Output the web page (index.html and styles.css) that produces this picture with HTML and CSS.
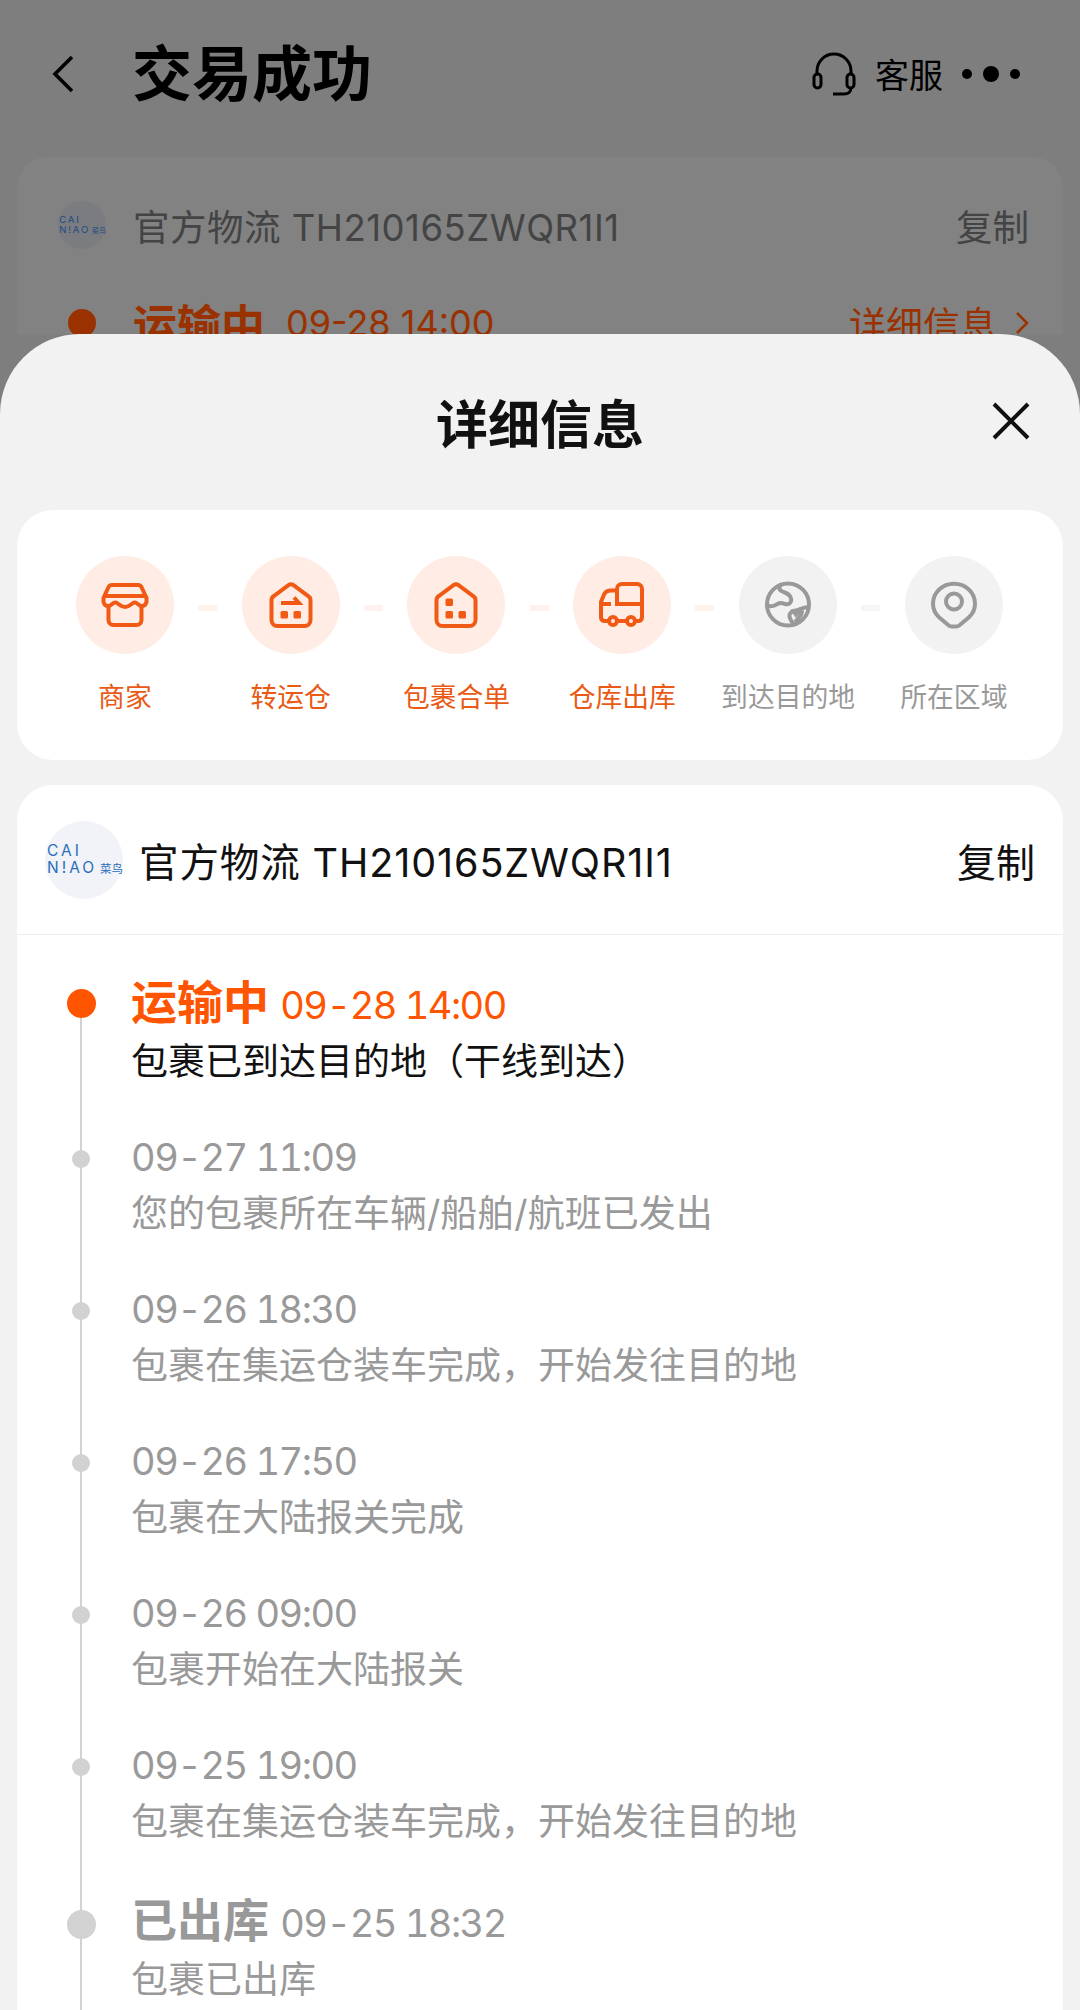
FILE: index.html
```html
<!DOCTYPE html>
<html lang="zh-CN">
<head>
  <meta charset="UTF-8" />
  <title>详细信息</title>
  <link rel="stylesheet" href="styles.css">
</head>
<body>

<div class="page">
  <header class="topbar">
    <svg class="back" viewBox="0 0 24 38"><path d="M21 2 4 19l17 17"/></svg>
    <h1>交易成功</h1>
    <div class="topbar-right">
      <svg class="headset" viewBox="0 0 44 44"><path d="M5 22v-3a17 17 0 0 1 34 0v3M21 42h11c4 0 7-2 7-6"/><rect x="2" y="22" width="7" height="14" rx="3.500"/><rect x="35" y="22" width="7" height="14" rx="3.500"/></svg>
      <span class="service">客服</span>
      <div class="more"><i></i><i class="big"></i><i></i></div>
    </div>
  </header>

  <section class="back-card">
    <div class="back-row">
      <svg class="logo logo-small" viewBox="0 0 78 78"><circle cx="39" cy="39" r="39"/><text x="2" y="35" class="logo-t">CAI</text><text x="2" y="52" class="logo-t">N!AO</text><text x="55" y="52" class="logo-c">菜鸟</text></svg>
      <span class="back-name">官方物流 TH210165ZWQR1I1</span>
      <span class="back-copy">复制</span>
    </div>
    <div class="back-row back-status">
      <span class="back-dot"></span>
      <b>运输中</b>
      <span class="back-time">09-28 14:00</span>
      <span class="back-link">详细信息<svg viewBox="0 0 14 24"><path d="M2 2l10 10L2 22"/></svg></span>
    </div>
  </section>
</div>

<div class="sheet">
  <div class="sheet-head">
    <h2>详细信息</h2>
    <svg class="close" viewBox="0 0 38 38"><path d="M2 2l34 34M36 2 2 36"/></svg>
  </div>

  <div class="card steps">
    <div class="step done">
      <div class="circle">
        <svg viewBox="0 0 48 48"><path d="M11 4h26a4 4 0 0 1 3.700 2.500L45.500 17v4c-.7 2.700-2.700 4-4.800 4-3 0-4.200-3.500-7-3.500s-4.500 4.500-9.700 4.500-6.800-4.500-9.700-4.500-4 3.500-7 3.500c-2.100 0-4.100-1.300-4.800-4v-4L7.300 6.500A4 4 0 0 1 11 4z"/><path d="M4 15h40M7.500 26v13a5 5 0 0 0 5 5h23a5 5 0 0 0 5-5V26"/></svg>
      </div>
      <span>商家</span>
    </div>
    <div class="step done">
      <div class="circle">
        <svg viewBox="0 0 48 48"><path d="M21.500 4.200 6.800 15A5 5 0 0 0 4.500 19v20a6 6 0 0 0 6 6h27a6 6 0 0 0 6-6V19a5 5 0 0 0-2.300-4L26.500 4.200a4.200 4.200 0 0 0-5 0z"/><path d="M14 22h18l-5-5.500"/><rect class="fill" x="13.500" y="30" width="7.500" height="7.500" rx="1.500"/><rect class="fill" x="26.500" y="30" width="7.500" height="7.500" rx="1.500"/></svg>
      </div>
      <span>转运仓</span>
    </div>
    <div class="step done">
      <div class="circle">
        <svg viewBox="0 0 48 48"><path d="M21.500 4.200 6.800 15A5 5 0 0 0 4.500 19v20a6 6 0 0 0 6 6h27a6 6 0 0 0 6-6V19a5 5 0 0 0-2.300-4L26.500 4.200a4.200 4.200 0 0 0-5 0z"/><rect class="fill" x="13.500" y="17.500" width="7.500" height="7.500" rx="1.500"/><rect class="fill" x="13.500" y="30" width="7.500" height="7.500" rx="1.500"/><rect class="fill" x="26.500" y="30" width="7.500" height="7.500" rx="1.500"/></svg>
      </div>
      <span>包裹合单</span>
    </div>
    <div class="step done">
      <div class="circle">
        <svg viewBox="0 0 48 48"><path d="M19 23V8a5 5 0 0 1 5-5h15a5 5 0 0 1 5 5v15z"/><path d="M19 9.500h-7a7 7 0 0 0-6 4L3 21v15a4 4 0 0 0 3 4h5M3 23h10M19 40h10M37 40h4a4 4 0 0 0 3-4V23"/><circle cx="15" cy="40" r="4"/><circle cx="33" cy="40" r="4"/></svg>
      </div>
      <span>仓库出库</span>
    </div>
    <div class="step">
      <div class="circle">
        <svg viewBox="0 0 48 48"><circle cx="24" cy="23.500" r="21"/><path d="M17.500 3c-3 3-3 6 1 7.500s7.500 2.500 8.500 7-3 6.500-6 5.500-4.500-2-7.500 0-6 3.500-12 1"/><path d="M46 26c-4-.5-7 1-11 2.500s-9 1-9.500 5.500 3 7 5.500 11"/><path d="M27 30.500c2-.5 3.500.5 5 3 1.500-2 3.500-3.500 6-2.500 0 3-3 6-7 10"/></svg>
      </div>
      <span>到达目的地</span>
    </div>
    <div class="step">
      <div class="circle">
        <svg viewBox="0 0 48 48"><path d="M24 2.700c-11.600 0-21 8.800-21 20 0 5.500 2.200 10 6 13.500l9.500 8c1 .8 2 1.300 3 1.300h5c1 0 2-.5 3-1.300l9.500-8c3.800-3.500 6-8 6-13.500 0-11.200-9.400-20-21-20z"/><circle cx="24" cy="20.500" r="8"/></svg>
      </div>
      <span>所在区域</span>
    </div>
  </div>

  <div class="card track">
    <div class="track-head">
      <svg class="logo" viewBox="0 0 78 78"><circle cx="39" cy="39" r="39"/><text x="2" y="35" class="logo-t">CAI</text><text x="2" y="52" class="logo-t">N!AO</text><text x="55" y="52" class="logo-c">菜鸟</text></svg>
      <span class="track-name">官方物流 TH210165ZWQR1I1</span>
      <span class="copy">复制</span>
    </div>

    <div class="timeline">
      <div class="row major current">
        <div class="dot-col"><span class="dot"></span></div>
        <div class="row-body">
          <div class="row-top"><b>运输中</b> <span>09-28 14:00</span></div>
          <div class="row-text">包裹已到达目的地（干线到达）</div>
        </div>
      </div>
      <div class="row">
        <div class="dot-col"><span class="dot"></span></div>
        <div class="row-body">
          <div class="row-top"><span>09-27 11:09</span></div>
          <div class="row-text">您的包裹所在车辆/船舶/航班已发出</div>
        </div>
      </div>
      <div class="row">
        <div class="dot-col"><span class="dot"></span></div>
        <div class="row-body">
          <div class="row-top"><span>09-26 18:30</span></div>
          <div class="row-text">包裹在集运仓装车完成，开始发往目的地</div>
        </div>
      </div>
      <div class="row">
        <div class="dot-col"><span class="dot"></span></div>
        <div class="row-body">
          <div class="row-top"><span>09-26 17:50</span></div>
          <div class="row-text">包裹在大陆报关完成</div>
        </div>
      </div>
      <div class="row">
        <div class="dot-col"><span class="dot"></span></div>
        <div class="row-body">
          <div class="row-top"><span>09-26 09:00</span></div>
          <div class="row-text">包裹开始在大陆报关</div>
        </div>
      </div>
      <div class="row">
        <div class="dot-col"><span class="dot"></span></div>
        <div class="row-body">
          <div class="row-top"><span>09-25 19:00</span></div>
          <div class="row-text">包裹在集运仓装车完成，开始发往目的地</div>
        </div>
      </div>
      <div class="row major">
        <div class="dot-col"><span class="dot"></span></div>
        <div class="row-body">
          <div class="row-top"><b>已出库</b> <span>09-25 18:32</span></div>
          <div class="row-text">包裹已出库</div>
        </div>
      </div>
    </div>
  </div>
</div>

</body>
</html>
```

FILE: styles.css
```css
:root {
  --orange: #ff5500;
  --dim-orange: #993200;
  --dim-text: #444444;
  --icon-orange: #f05a14;
  --step-orange: #e95a14;
  --grey-text: #999999;
  --line: #d2d2d2;
}

* {
  box-sizing: border-box;
  font-family: Inter, 'Noto Sans CJK SC', sans-serif;
}

html, body {
  margin: 0;
  height: 2010px;
  overflow: hidden;
}

body {
  position: relative;
  width: 1080px;
  background: #7e7e7e;
}

/* page behind the sheet, drawn in its dimmed colours */
.page {
  height: 334px;
  padding: 0 17px;
  overflow: hidden;
}

.topbar {
  display: flex;
  align-items: center;
  height: 147px;
  padding: 0 43px 0 34px;
}

.back {
  width: 24px;
  height: 38px;
  margin-right: 57px;
}

.back path {
  fill: none;
  stroke: #000;
  stroke-width: 3.6;
}

h1 {
  margin: 0;
  font-size: 60px;
  font-weight: 700;
  color: #000;
  line-height: 1;
}

.topbar-right {
  margin-left: auto;
  display: flex;
  align-items: center;
}

.headset {
  width: 44px;
  height: 44px;
  fill: none;
  stroke: #000;
  stroke-width: 3;
  margin-right: 19px;
}

.service {
  font-size: 34px;
  color: #000;
}

.more {
  display: flex;
  align-items: center;
  gap: 11px;
  margin-left: 19px;
}

.more i {
  width: 10px;
  height: 10px;
  border-radius: 50%;
  background: #000;
}

.more i.big {
  width: 16px;
  height: 16px;
}

.back-card {
  margin-top: 10px;
  height: 300px;
  padding: 0 34px 0 41px;
  border-radius: 30px;
  background: #828282;
}

.back-row {
  display: flex;
  align-items: center;
  height: 46px;
  position: relative;
  top: 45px;
}

.logo.logo-small {
  width: 48px;
  height: 48px;
  margin-right: 27px;
}

.logo.logo-small circle {
  fill: #7b7c80;
}

.logo.logo-small text {
  fill: #1d4a80;
}

.back-name {
  font-size: 36.500px;
  letter-spacing: 0.5px;
  color: var(--dim-text);
}

.back-copy {
  margin-left: auto;
  font-size: 36.500px;
  color: var(--dim-text);
}

.back-status {
  margin-top: 52px;
}

.back-dot {
  width: 28px;
  height: 28px;
  border-radius: 50%;
  background: var(--dim-orange);
  margin: 0 37px 0 10px;
}

.back-status b {
  font-size: 44px;
  color: var(--dim-orange);
}

.back-time {
  margin-left: 21px;
  font-size: 36px;
  color: var(--dim-orange);
}

.back-link {
  margin-left: auto;
  font-size: 37px;
  color: var(--dim-orange);
  display: flex;
  align-items: center;
  gap: 18px;
}

.back-link svg {
  width: 14px;
  height: 24px;
  fill: none;
  stroke: var(--dim-orange);
  stroke-width: 2.500;
}

/* bottom sheet */
.sheet {
  position: absolute;
  top: 334px;
  left: 0;
  right: 0;
  bottom: 0;
  padding: 0 17px;
  background: #f2f2f2;
  border-radius: 80px 80px 0 0;
  overflow: hidden;
}

.sheet-head {
  display: grid;
  grid-template-columns: 1fr auto 1fr;
  align-items: center;
  height: 176px;
}

h2 {
  grid-column: 2;
  margin: 8px 0 0;
  font-size: 52px;
  font-weight: 700;
  color: #111;
  line-height: 1;
}

.close {
  justify-self: end;
  width: 38px;
  height: 38px;
  margin: 0 33px 2px 0;
  fill: none;
  stroke: #111;
  stroke-width: 4;
}

.card {
  background: #fff;
  border-radius: 36px;
}

/* progress steps */
.steps {
  display: grid;
  grid-template-columns: repeat(6, 165.800px);
  height: 250px;
  padding: 46px 25px 0;
  margin-bottom: 25px;
}

.step {
  position: relative;
  display: flex;
  flex-direction: column;
  align-items: center;
  font-size: 26.800px;
  line-height: 38px;
  color: var(--grey-text);
}

.step span {
  margin-top: 24px;
}

.circle {
  width: 98px;
  height: 98px;
  border-radius: 50%;
  display: flex;
  align-items: center;
  justify-content: center;
  background: #f2f2f2;
}

.circle svg {
  width: 48px;
  height: 48px;
  fill: none;
  stroke: #999999;
  stroke-width: 4;
}

.step::after {
  content: "";
  position: absolute;
  top: 49px;
  left: 156px;
  width: 19px;
  height: 6px;
  background: #f6f6f6;
}

.step:last-child::after {
  display: none;
}

.step.done {
  color: var(--step-orange);
}

.step.done .circle {
  background: #ffede5;
}

.step.done .circle svg {
  stroke: var(--icon-orange);
}

.step.done::after {
  background: #fef2ec;
}

.circle svg .fill {
  fill: var(--icon-orange);
  stroke: none;
}

/* logistics card */
.track {
  height: 1300px;
  border-radius: 36px 36px 0 0;
}

.track-head {
  display: flex;
  align-items: center;
  height: 150px;
  padding: 0 28px;
  border-bottom: 1px solid #eeeeee;
}

.logo {
  width: 78px;
  height: 78px;
  margin-right: 16px;
  flex-shrink: 0;
}

.logo circle {
  fill: #f1f3f8;
}

.logo-t {
  font-family: Inter, sans-serif;
  font-size: 15.500px;
  font-weight: 400;
  letter-spacing: 3px;
  fill: #2a6ebb;
}

.logo-c {
  font-family: 'Noto Sans CJK SC', sans-serif;
  font-size: 11.500px;
  fill: #2a6ebb;
}

.track-name {
  font-size: 39.500px;
  letter-spacing: 0.9px;
  color: #111;
}

.copy {
  margin-left: auto;
  font-size: 39px;
  color: #111;
}

.timeline {
  position: relative;
  padding: 41.500px 0 0 39px;
}

.timeline::before {
  content: "";
  position: absolute;
  left: 63px;
  top: 70px;
  bottom: 0;
  width: 1.500px;
  background: var(--line);
}

.row {
  display: grid;
  grid-template-columns: 50px 1fr;
  column-gap: 25px;
  height: 152px;
}

.dot-col {
  position: relative;
  height: 60px;
  display: flex;
  align-items: center;
  justify-content: center;
}

.dot {
  width: 18px;
  height: 18px;
  border-radius: 50%;
  background: var(--line);
}

.row-top {
  height: 56px;
  line-height: 56px;
  font-size: 38px;
  font-weight: 400;
  font-variant-numeric: tabular-nums;
  color: var(--grey-text);
  white-space: nowrap;
}

.row-top span {
  letter-spacing: -1.500px;
}

.row-top b {
  font-size: 46px;
  font-weight: 700;
  margin-right: 1px;
}

.row-text {
  height: 57px;
  line-height: 57px;
  font-size: 37px;
  color: var(--grey-text);
}

.major .dot {
  width: 29px;
  height: 29px;
}

.major .row-top {
  margin-top: -3px;
}

.major .row-text {
  margin-top: 3px;
}

.major:last-child {
  margin-top: 6px;
}

.current .dot {
  background: var(--orange);
}

.current .dot-col {
  height: 53px;
}

.current .row-top {
  color: var(--orange);
}

.current .row-text {
  color: #111;
}
```
